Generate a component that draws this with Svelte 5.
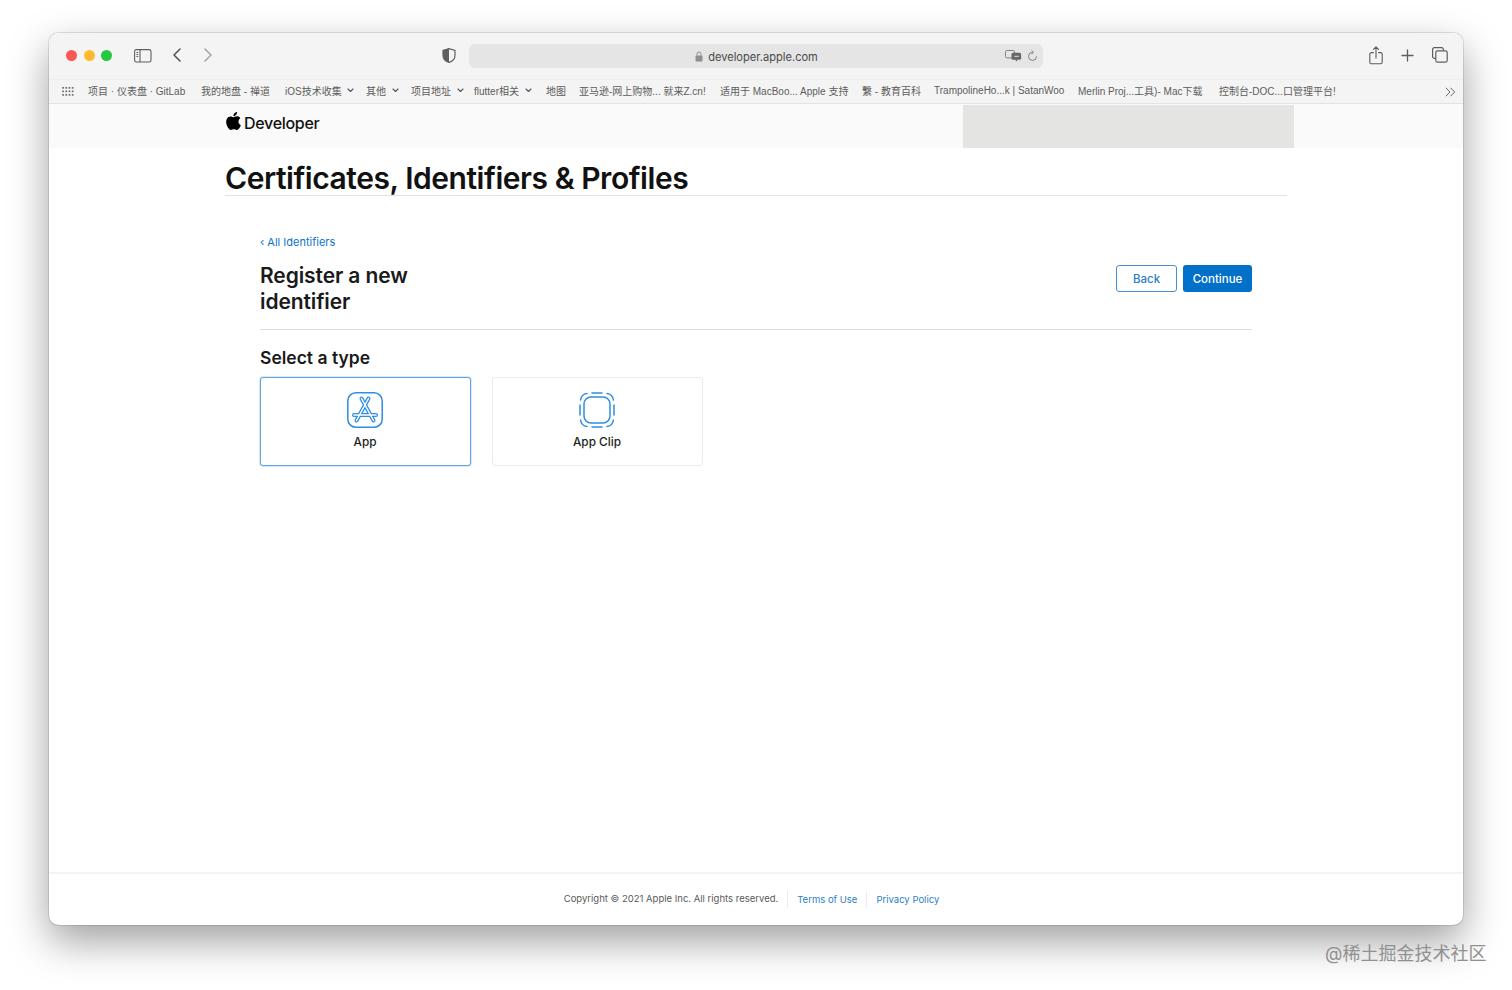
<script>
  // width = distance to the next bookmark's start, as Safari spaces them
  const bookmarks = [
    { label: '项目 · 仪表盘 · GitLab', width: 113 },
    { label: '我的地盘 - 禅道', width: 84 },
    { label: 'iOS技术收集', width: 81, menu: true },
    { label: '其他', width: 45, menu: true },
    { label: '项目地址', width: 63, menu: true },
    { label: 'flutter相关', width: 72, menu: true },
    { label: '地图', width: 33 },
    { label: '亚马逊-网上购物... 就来Z.cn!', width: 141 },
    { label: '适用于 MacBoo... Apple 支持', width: 142 },
    { label: '繫 - 教育百科', width: 72 },
    { label: 'TrampolineHo...k | SatanWoo', width: 144 },
    { label: 'Merlin Proj...工具)- Mac下载', width: 141 },
    { label: '控制台-DOC...口管理平台!', width: 130 }
  ];
</script>

<div class="page">
  <div class="window">
    <header class="toolbar">
      <div class="lights">
        <span class="light red"></span>
        <span class="light yellow"></span>
        <span class="light green"></span>
      </div>
      <svg class="sidebar-icon" width="18" height="14" viewBox="0 0 18 14" fill="none" stroke="#5e5e5e" stroke-width="1.1">
        <rect x="0.6" y="0.6" width="16.4" height="12.4" rx="1.8" />
        <path d="M6 .6v12.4" />
        <path d="M2.4 3.5h1.8M2.4 5.5h1.8M2.4 7.5h1.8" />
      </svg>
      <svg class="back" width="10" height="16" viewBox="0 0 10 16" fill="none" stroke="#505050" stroke-width="1.5" stroke-linecap="round" stroke-linejoin="round">
        <path d="M8 2 2 8l6 6" />
      </svg>
      <svg class="forward" width="10" height="16" viewBox="0 0 10 16" fill="none" stroke="#a5a5a5" stroke-width="1.5" stroke-linecap="round" stroke-linejoin="round">
        <path d="m2 2 6 6-6 6" />
      </svg>
      <svg class="shield" width="14" height="15" viewBox="0 0 14 15">
        <path d="M7 .6 1 2.400v5c0 3.400 2.600 5.800 6 7 3.400-1.200 6-3.600 6-7v-5z" fill="none" stroke="#5e5e5e" stroke-width="1.2" />
        <path d="M7 .6 1 2.400v5c0 3.400 2.600 5.800 6 7z" fill="#5e5e5e" />
      </svg>
      <div class="address">
        <div class="host">
          <svg width="8" height="11" viewBox="0 0 8 11">
            <rect x="0.5" y="4.4" width="7" height="6" rx="1" fill="#8e8e8e" />
            <path d="M2 4.600V3a2 2 0 0 1 4 0v1.600" fill="none" stroke="#8e8e8e" stroke-width="1" />
          </svg>
          <span>developer.apple.com</span>
        </div>
        <svg class="translate" width="17" height="12" viewBox="0 0 17 12">
          <rect x="0.5" y="0.5" width="9" height="7.4" rx="1.4" fill="none" stroke="#777" stroke-width="0.9" />
          <rect x="6.5" y="2.8" width="9.6" height="7" rx="1.6" fill="#666" />
          <path d="m10 9.500 1.600 2 1-2z" fill="#666" />
          <path d="M9.400 6.300h4.400" stroke="#e6e5e5" stroke-width="1" />
        </svg>
        <svg class="reload" width="11" height="12" viewBox="0 0 11 12" fill="none" stroke="#808080" stroke-width="1">
          <path d="M5.500 2.400a4 4 0 1 0 4 4" />
          <path d="m4.600.6 1.900 1.800-1.900 1.600" />
        </svg>
      </div>
      <div class="actions">
        <svg width="14" height="19" viewBox="0 0 14 19" fill="none" stroke="#5e5e5e" stroke-width="1.1" stroke-linecap="round" stroke-linejoin="round">
          <path d="M4.400 6.600H2.400a1.600 1.600 0 0 0-1.600 1.600v8a1.600 1.600 0 0 0 1.600 1.600h9.200a1.600 1.600 0 0 0 1.600-1.600v-8a1.600 1.600 0 0 0-1.600-1.600H9.600" />
          <path d="M7 12V1M4.400 3.400 7 .9l2.600 2.500" />
        </svg>
        <svg width="13" height="13" viewBox="0 0 13 13" stroke="#5e5e5e" stroke-width="1.3" stroke-linecap="round">
          <path d="M6.500 1v11M1 6.500h11" />
        </svg>
        <svg width="16" height="16" viewBox="0 0 16 16" fill="none" stroke="#5e5e5e" stroke-width="1.2">
          <path d="M3.600 11.400H2.400A1.800 1.800 0 0 1 .6 9.600V2.400A1.800 1.800 0 0 1 2.400.6h7.200a1.800 1.800 0 0 1 1.800 1.800v1.200" />
          <rect x="3.800" y="3.800" width="11.400" height="11.400" rx="1.800" />
        </svg>
      </div>
    </header>

    <nav class="bookmarks">
      <svg class="grid-icon" width="12" height="10" viewBox="0 0 12 10" fill="#6a6a6a">
        {#each [0, 1, 2] as row}
          {#each [0, 1, 2, 3] as col}
            <rect x={col * 3.2 + 0.2} y={row * 3.5 + 1} width="1.7" height="1.7" />
          {/each}
        {/each}
      </svg>
      <ul>
        {#each bookmarks as item}
          <li style="width: {item.width}px">
            {item.label}
            {#if item.menu}
              <svg width="7" height="5" viewBox="0 0 7 5" fill="none" stroke="#555" stroke-width="1.1" stroke-linecap="round" stroke-linejoin="round">
                <path d="m1 1 2.500 2.500L6 1" />
              </svg>
            {/if}
          </li>
        {/each}
      </ul>
      <svg class="more" width="11" height="10" viewBox="0 0 11 10" fill="none" stroke="#666" stroke-width="1">
        <path d="m.8.8 4.200 4.200L.8 9.200M5.500.8 9.700 5 5.500 9.200" />
      </svg>
    </nav>

    <div class="local-nav">
      <div class="brand">
        <svg width="15" height="18" viewBox="3 0 18 24" fill="#000">
          <path d="M12.152 6.896c-.948 0-2.415-1.078-3.960-1.040-2.040.027-3.910 1.183-4.961 3.014-2.117 3.675-.546 9.103 1.519 12.090 1.013 1.454 2.208 3.090 3.792 3.039 1.520-.065 2.090-.987 3.935-.987 1.831 0 2.350.987 3.960.948 1.637-.026 2.676-1.480 3.676-2.948 1.156-1.688 1.636-3.325 1.662-3.415-.039-.013-3.182-1.221-3.220-4.857-.026-3.040 2.480-4.494 2.597-4.559-1.429-2.090-3.623-2.324-4.390-2.376-2-.156-3.675 1.090-4.610 1.090zM15.530 3.830c.843-1.012 1.400-2.427 1.245-3.830-1.207.052-2.662.805-3.532 1.818-.78.896-1.454 2.338-1.273 3.714 1.338.104 2.715-.688 3.559-1.701" />
        </svg>
        <span>Developer</span>
      </div>
      <div class="account-redacted"></div>
    </div>

    <main class="content">
      <h1>Certificates, Identifiers &amp; Profiles</h1>

      <section class="panel">
        <a class="crumb" href="#identifiers">‹ All Identifiers</a>
        <div class="panel-head">
          <h2>Register a new<br />identifier</h2>
          <div class="buttons">
            <button class="btn outline">Back</button>
            <button class="btn solid">Continue</button>
          </div>
        </div>

        <h3>Select a type</h3>
        <div class="types">
          <div class="type selected">
            <svg width="36" height="36" viewBox="0 0 36 36" fill="none" stroke-linecap="round">
              <rect x="0.8" y="0.8" width="34.4" height="34.4" rx="8" stroke="#2f8de4" stroke-width="1.5" />
              <g stroke="#2f8de4" stroke-width="4">
                <path d="M14.500 6.500 26.500 28.500M21.500 6.500 9.500 28.500M7 23h22" />
              </g>
              <g stroke="#fff" stroke-width="1.500">
                <path d="M14.500 6.500 26.500 28.500M21.500 6.500 9.500 28.500M7 23h22" />
              </g>
            </svg>
            <span>App</span>
          </div>
          <div class="type">
            <svg width="36" height="36" viewBox="0 0 36 36" fill="none" stroke="#2f8de4" stroke-width="1.5" stroke-linecap="round">
              <rect x="5" y="5" width="26" height="26" rx="7" />
              <path d="M13 1h10M13 35h10M1 13v10M35 13v10" />
              <path d="M8 1.600A7 7 0 0 0 1.600 8M28 1.600A7 7 0 0 1 34.400 8M8 34.400A7 7 0 0 1 1.600 28M28 34.400A7 7 0 0 0 34.400 28" />
            </svg>
            <span>App Clip</span>
          </div>
        </div>
      </section>
    </main>

    <footer class="footer">
      <span class="copyright">Copyright © 2021 Apple Inc. All rights reserved.</span>
      <a href="#terms">Terms of Use</a>
      <a href="#privacy">Privacy Policy</a>
    </footer>
  </div>

  <div class="watermark">@稀土掘金技术社区</div>
</div>

<style>
  :global(body) {
    margin: 0;
    background: #fff;
  }

  .page {
    position: relative;
    box-sizing: border-box;
    height: 990px;
    overflow: hidden;
    padding: 33px 49px 0;
    font-family: Inter, "Noto Sans CJK SC", sans-serif;
    color: #111;
  }

  .window {
    display: flex;
    flex-direction: column;
    box-sizing: border-box;
    height: 892px;
    border-radius: 10px;
    overflow: hidden;
    background: #fff;
    box-shadow: 0 0 0 1px rgba(0, 0, 0, 0.1), 0 16px 40px rgba(0, 0, 0, 0.38);
  }

  .toolbar {
    display: flex;
    align-items: center;
    flex: none;
    height: 46px;
    background: #f5f4f4;
  }

  .lights {
    display: flex;
    gap: 6.5px;
    margin: 0 0 2px 17px;
  }

  .light {
    width: 11px;
    height: 11px;
    border-radius: 50%;
  }

  .red { background: #fc5753; }
  .yellow { background: #fdbc2e; }
  .green { background: #27c73f; }

  .sidebar-icon { margin: 0 0 1px 22px; }
  .back { margin: 0 0 2px 20px; }
  .forward { margin: 0 0 2px 21px; }
  .shield { margin: 0 0 1px 229px; }

  .address {
    display: flex;
    align-items: center;
    position: relative;
    justify-content: center;
    box-sizing: border-box;
    width: 574px;
    height: 24px;
    margin-left: 13px;
    border-radius: 6px;
    background: #e6e5e5;
  }

  .host {
    display: flex;
    align-items: center;
    gap: 5px;
    margin: 1px 0 0 1px;
    font-size: 11.1px;
    color: #4a4a4a;
  }

  .translate {
    position: absolute;
    left: 536px;
    top: 6px;
  }

  .reload {
    position: absolute;
    left: 558px;
    top: 6px;
  }

  .actions {
    display: flex;
    align-items: center;
    gap: 18px;
    margin: 0 0 2px 326px;
  }

  .bookmarks {
    display: flex;
    align-items: center;
    flex: none;
    box-sizing: border-box;
    height: 25px;
    padding-bottom: 2px;
    border-top: 1px solid #eeeded;
    border-bottom: 1px solid #e3e3e3;
    background: #f5f4f4;
  }

  .grid-icon { margin-left: 13px; }

  ul {
    display: flex;
    flex: 1;
    margin: 0 0 0 14px;
    padding: 0;
    list-style: none;
  }

  li {
    display: flex;
    flex: none;
    align-items: center;
    gap: 3px;
    font-family: "Liberation Sans", "Noto Sans CJK SC", sans-serif;
    font-size: 10px;
    white-space: pre;
    color: #5c5c5c;
  }

  .more { margin: 3px 7px 0 0; }

  .local-nav {
    display: flex;
    align-items: center;
    flex: none;
    height: 44px;
    background: #fafafa;
  }

  .brand {
    display: flex;
    align-items: center;
    gap: 3px;
    margin: 0 0 6px 177px;
    font-size: 16px;
    font-weight: 500;
    letter-spacing: -0.3px;
    color: #111;
  }

  .brand svg { margin-top: -4px; }

  .account-redacted {
    align-self: flex-end;
    width: 331px;
    height: 43px;
    margin: 0 169px 0 auto;
    background: #e4e4e2;
  }

  .content {
    flex: 1;
    padding: 0 176px;
    border-bottom: 2px solid #f4f4f4;
  }

  h1 {
    margin: 13px 0 0;
    border-bottom: 1px solid #e3e3e3;
    font-size: 30px;
    line-height: 34px;
    font-weight: 600;
    letter-spacing: -0.45px;
    color: #111;
  }

  .panel {
    margin: 0 35px;
    padding-top: 39px;
  }

  .crumb {
    display: block;
    font-size: 11px;
    line-height: 14px;
    color: #0f74c9;
    text-decoration: none;
  }

  .panel-head {
    display: flex;
    justify-content: space-between;
    align-items: flex-start;
    margin-top: 14px;
    padding-bottom: 14px;
    border-bottom: 1px solid #dedede;
  }

  h2 {
    margin: 0;
    font-size: 21px;
    line-height: 26px;
    font-weight: 600;
    letter-spacing: -0.1px;
    color: #1a1a1a;
  }

  .buttons {
    display: flex;
    gap: 6px;
    margin-top: 2px;
  }

  .btn {
    box-sizing: border-box;
    height: 27px;
    border-radius: 3px;
    font: 500 11.5px Inter, sans-serif;
  }

  .outline {
    width: 61px;
    border: 1px solid #4a90d0;
    background: #fff;
    color: #2a7cc7;
  }

  .solid {
    width: 69px;
    border: 0;
    background: #0070c9;
    color: #fff;
  }

  h3 {
    margin: 17px 0 0;
    font-size: 17.5px;
    line-height: 22px;
    font-weight: 600;
    color: #1a1a1a;
  }

  .types {
    display: flex;
    gap: 21px;
    margin-top: 8px;
  }

  .type {
    display: flex;
    flex-direction: column;
    align-items: center;
    box-sizing: border-box;
    width: 211px;
    height: 89px;
    padding: 14px 1px 0 0;
    border: 1px solid #ebebeb;
    border-radius: 3px;
    background: #fff;
  }

  .type.selected {
    border-color: #65a5dc;
    box-shadow: 0 0 0 0.5px rgba(101, 165, 220, 0.5);
  }

  .type span {
    margin-top: 6px;
    font-size: 11.8px;
    line-height: 16px;
    font-weight: 500;
    color: #1d1d1d;
  }

  .footer {
    display: flex;
    justify-content: center;
    align-items: center;
    flex: none;
    height: 51px;
    padding-right: 9px;
    font-size: 9.5px;
    color: #5a5a5a;
  }

  .copyright { margin-top: -2px; }

  .footer a {
    margin-left: 9px;
    padding: 3px 0 3px 9px;
    border-left: 1px solid #ececec;
    color: #2e7fc6;
    text-decoration: none;
  }

  .watermark {
    position: absolute;
    left: 1325px;
    top: 943px;
    font-size: 18px;
    line-height: 22px;
    color: #909090;
    white-space: nowrap;
  }
</style>
